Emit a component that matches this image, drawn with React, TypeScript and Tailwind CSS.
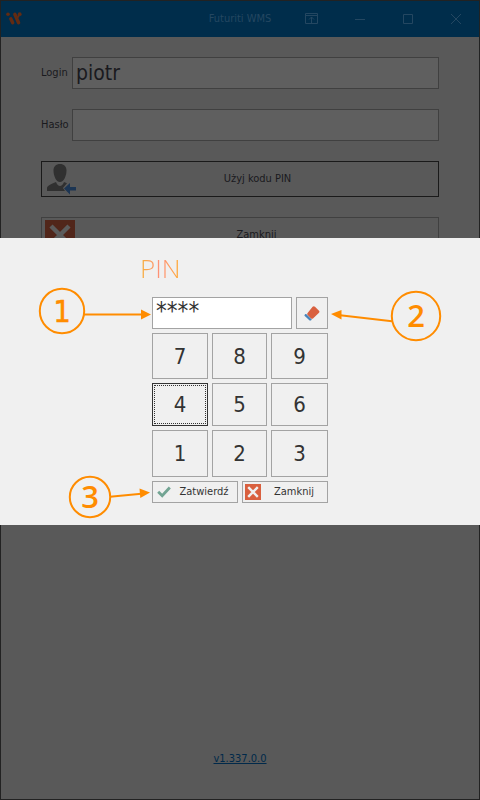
import { useState } from 'react'
import type { ReactNode } from 'react'

const KEYS = ['7', '8', '9', '4', '5', '6', '1', '2', '3']

function Logo() {
  return (
    <svg width="18" height="14" viewBox="0 0 18 14" aria-hidden="true">
      <path
        fill="none"
        stroke="#632b12"
        strokeWidth="3.4"
        strokeLinecap="round"
        d="m5.800 6.800 1.900 4M9.800 2.300l3.800 8.500"
      />
      <path fill="none" stroke="#632b12" strokeWidth="2" d="M12.600 5.500 14.800 2" />
      <circle cx="3" cy="2.200" r="1.800" fill="#632b12" />
      <circle cx="14.700" cy="2.200" r="1.900" fill="#632b12" />
    </svg>
  )
}

function UserIcon() {
  return (
    <svg width="30" height="31" viewBox="0 0 30 31" aria-hidden="true">
      <path
        fill="#303030"
        d="M13 0c4 0 6.500 2.500 6.500 6.500 0 5-2.500 11.500-6.500 11.500S6.500 11.500 6.500 6.500C6.500 2.500 9 0 13 0ZM0 27v-3c0-2 4-4 9-6 1 2.500 2.500 4 4 4s3-1.500 4-4l3 1.300L16 24l2 3Z"
      />
      <path fill="#1c3553" d="m17 24.500 6-5.500v4h6v3.500h-6v4Z" />
    </svg>
  )
}

function CrossIcon({ size, dim }: { size: number; dim?: boolean }) {
  return (
    <svg width={size} height={size} viewBox="0 0 16 16" aria-hidden="true">
      <path fill={dim ? '#51261a' : '#d9603f'} d="M0 0h16v16H0z" />
      <path stroke={dim ? '#5c5c5c' : '#f0f0f0'} strokeWidth="2.4" d="m3.200 3.200 9.600 9.600m0-9.600-9.600 9.600" />
    </svg>
  )
}

function EraserIcon() {
  return (
    <svg width="16" height="15" viewBox="0 0 16 15" aria-hidden="true">
      <path fill="#d9603f" d="M8.600.800q1.200-1 2.400 0l4 4q.900 1 0 2l-6 5.700q-1 .700-2 0l-3.400-3.400q-.800-1 0-2Z" />
      <path fill="#4a84b9" d="m2.200 8 5.600 5.400-.9 1H5.600L.500 9.800V8.900L1.400 8Z" />
    </svg>
  )
}

function WindowButton({ label, children }: { label: string; children: ReactNode }) {
  return (
    <button aria-label={label} className="flex h-9 w-12 items-center justify-center">
      <svg width="14" height="12" viewBox="0 0 14 12" fill="none" stroke="#244761" aria-hidden="true">
        {children}
      </svg>
    </button>
  )
}

function Callouts() {
  return (
    <svg
      className="pointer-events-none absolute top-0 left-1/2 -ml-[240px] h-[287px] w-[480px]"
      viewBox="0 238 480 287"
      aria-hidden="true"
    >
      <g fill="none" stroke="#ff8c00" strokeWidth="2">
        <circle cx="62" cy="311" r="22.2" />
        <circle cx="416" cy="316" r="24.2" />
        <circle cx="90" cy="497" r="20.2" />
        <path d="M84 314.500h60M392 321.300 338 315M110 496.800l34-3.300" />
      </g>
      <g fill="#ff8c00">
        <path d="m151 314.500-10-5v10ZM331 314l10.500-4v9.500ZM150 492.500l-10.500-4 .8 9.500Z" />
        <g textAnchor="middle" className="font-['Open_Sans'] text-[31px] font-semibold">
          <text x="62" y="322" className="font-['DejaVu_Sans_Condensed'] text-[30px] font-normal" stroke="#ff8c00" strokeWidth="0.6">
            1
          </text>
          <text x="416" y="327">2</text>
          <text x="90" y="508">3</text>
        </g>
      </g>
    </svg>
  )
}

function PinDialog() {
  const [pin, setPin] = useState('****')

  return (
    <section role="dialog" aria-label="PIN" className="absolute -inset-x-px top-[237px] bg-[#f0f0f0] pt-3 pb-[22px]">
      <div className="mx-auto w-50">
        <h1 className="h-[47px] bg-gradient-to-r from-[#f5b030] from-0% via-[#ff8f78] via-10% to-[#ffa820] to-20% bg-clip-text font-['Open_Sans'] text-[26px] leading-[36px] font-light text-transparent">
          PIN
        </h1>
        <div className="space-y-1 px-3">
          <div className="flex gap-1">
            <input
              aria-label="PIN"
              value={pin}
              onChange={(e) => setPin(e.target.value)}
              className="h-8 min-w-0 flex-1 border border-[#a3a3a3] bg-white px-[3px] pb-1 text-[24px] outline-none"
            />
            <button
              aria-label="Wyczyść"
              onClick={() => setPin('')}
              className="flex size-8 items-center justify-center border border-[#a3a3a3]"
            >
              <EraserIcon />
            </button>
          </div>
          <div className="grid grid-cols-[56px_55px_57px] grid-rows-[46px_43px_47px] gap-1">
            {KEYS.map((key) => (
              <button
                key={key}
                onClick={() => setPin(pin + '*')}
                className={`border p-px text-[22px] ${key === '4' ? 'border-[#333333]' : 'border-[#a3a3a3]'}`}
              >
                <span
                  className={`flex h-full items-center justify-center ${
                    key === '4' ? 'border border-dotted border-[#333333]' : ''
                  }`}
                >
                  {key}
                </span>
              </button>
            ))}
          </div>
          <div className="grid grid-cols-2 gap-1 text-[11px]">
            <button className="flex h-[22px] items-center border border-[#a3a3a3] pl-1">
              <svg width="14" height="12" viewBox="0 0 14 12" aria-hidden="true">
                <path fill="none" stroke="#72a493" strokeWidth="2.800" d="m1.200 5.800 4 4L12.800 1.500" />
              </svg>
              <span className="flex-1 text-center">Zatwierdź</span>
            </button>
            <button className="flex h-[22px] items-center border border-[#a3a3a3] pl-[2px]">
              <CrossIcon size={16} />
              <span className="flex-1 text-center">Zamknij</span>
            </button>
          </div>
        </div>
      </div>
      <Callouts />
    </section>
  )
}

export default function App() {
  return (
    <div className="relative flex min-h-screen flex-col border border-[#222222] bg-[#595959] font-['DejaVu_Sans_Condensed','DejaVu_Sans',sans-serif] text-[11px] text-[#333333]">
      <header className="grid h-9 grid-cols-[1fr_auto_1fr] items-center bg-[#002d4b] text-[#244761]">
        <div className="pl-1">
          <Logo />
        </div>
        <span>Futuriti WMS</span>
        <div className="flex justify-end">
          <WindowButton label="Pełny ekran">
            <path d="M1.500.500h12v10h-12zM1.500 2.500h12M7.500 10V4M5 6.500 7.500 4 10 6.500" />
          </WindowButton>
          <WindowButton label="Minimalizuj">
            <path d="M3 6.500h10" />
          </WindowButton>
          <WindowButton label="Maksymalizuj">
            <path d="M3.500 1.500h9v9h-9z" />
          </WindowButton>
          <WindowButton label="Zamknij okno">
            <path d="m3 1 10 10M13 1 3 11" />
          </WindowButton>
        </div>
      </header>

      <main className="flex flex-1 flex-col gap-5 px-10 pt-5 text-[#1a1a1e]">
        <div className="flex items-center">
          <label htmlFor="login" className="w-[31px] whitespace-nowrap">
            Login
          </label>
          <input
            id="login"
            defaultValue="piotr"
            className="h-8 min-w-0 flex-1 border border-[#404040] bg-[#5f5f5f] px-[3px] text-[21px] outline-none"
          />
        </div>
        <div className="flex items-center">
          <label htmlFor="password" className="w-[31px] whitespace-nowrap">
            Hasło
          </label>
          <input
            id="password"
            type="password"
            className="h-8 min-w-0 flex-1 border border-[#404040] bg-[#5f5f5f] px-[3px] text-[21px] outline-none"
          />
        </div>
        <button className="flex h-9 items-center border border-[#1a1a1a] pl-[5px]">
          <UserIcon />
          <span className="flex-1 text-center">Użyj kodu PIN</span>
        </button>
        <button className="flex h-9 items-center border border-[#404040] pl-[3px]">
          <CrossIcon size={30} dim />
          <span className="flex-1 text-center">Zamknij</span>
        </button>
      </main>

      <footer className="pb-8 text-center">
        <a href="#" className="text-[11px] text-[#00294a] underline">
          v1.337.0.0
        </a>
      </footer>

      <PinDialog />
    </div>
  )
}
